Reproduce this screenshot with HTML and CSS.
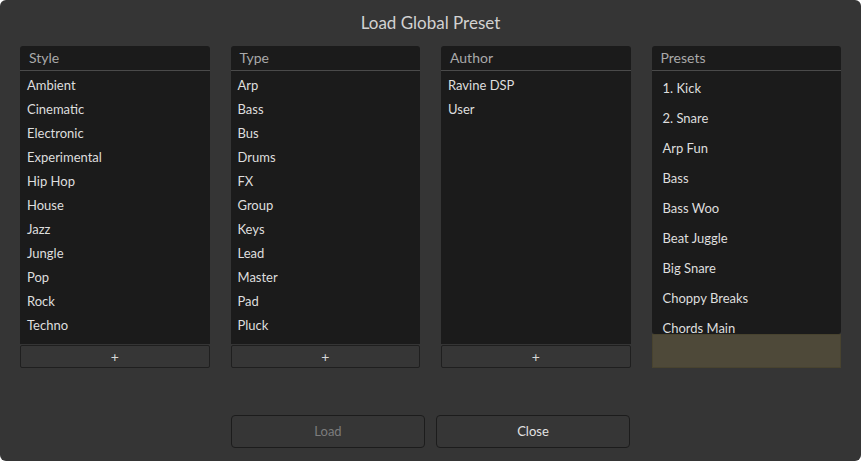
FILE: index.html
```html
<!DOCTYPE html>
<html>
<head>
<meta charset="utf-8">
<link rel="stylesheet" href="styles.css">
</head>
<body>
<div class="window">
  <div class="title">Load Global Preset</div>
  <div class="columns">
    <div class="col">
      <div class="panel">
        <div class="head">Style</div>
        <div class="list">
          <div class="item">Ambient</div>
          <div class="item">Cinematic</div>
          <div class="item">Electronic</div>
          <div class="item">Experimental</div>
          <div class="item">Hip Hop</div>
          <div class="item">House</div>
          <div class="item">Jazz</div>
          <div class="item">Jungle</div>
          <div class="item">Pop</div>
          <div class="item">Rock</div>
          <div class="item">Techno</div>
        </div>
      </div>
      <div class="add">+</div>
    </div>
    <div class="col">
      <div class="panel">
        <div class="head">Type</div>
        <div class="list">
          <div class="item">Arp</div>
          <div class="item">Bass</div>
          <div class="item">Bus</div>
          <div class="item">Drums</div>
          <div class="item">FX</div>
          <div class="item">Group</div>
          <div class="item">Keys</div>
          <div class="item">Lead</div>
          <div class="item">Master</div>
          <div class="item">Pad</div>
          <div class="item">Pluck</div>
        </div>
      </div>
      <div class="add">+</div>
    </div>
    <div class="col">
      <div class="panel">
        <div class="head">Author</div>
        <div class="list">
          <div class="item">Ravine DSP</div>
          <div class="item">User</div>
        </div>
      </div>
      <div class="add">+</div>
    </div>
    <div class="col">
      <div class="panel presets">
        <div class="head">Presets</div>
        <div class="list">
          <div class="pitem">1. Kick</div>
          <div class="pitem">2. Snare</div>
          <div class="pitem">Arp Fun</div>
          <div class="pitem">Bass</div>
          <div class="pitem">Bass Woo</div>
          <div class="pitem">Beat Juggle</div>
          <div class="pitem">Big Snare</div>
          <div class="pitem">Choppy Breaks</div>
          <div class="pitem">Chords Main</div>
        </div>
      </div>
      <div class="info"></div>
    </div>
  </div>
  <div class="actions">
    <div class="btn disabled">Load</div>
    <div class="btn">Close</div>
  </div>
</div>
</body>
</html>
```

FILE: styles.css
```css
html, body {
  margin: 0;
  padding: 0;
  background: #ffffff;
}
body {
  width: 861px;
  height: 461px;
  overflow: hidden;
  font-family: "Lato", "Open Sans", sans-serif;
}
.window {
  width: 861px;
  height: 461px;
  box-sizing: border-box;
  background: #353535;
  border-radius: 6px;
  display: flex;
  flex-direction: column;
  padding: 0 20px;
}
.title {
  height: 46px;
  line-height: 46px;
  text-align: center;
  color: #d2d2d2;
  font-size: 17px;
}
.columns {
  display: flex;
  gap: 21px;
  height: 322px;
}
.col {
  flex: 1;
  display: flex;
  flex-direction: column;
}
.panel {
  flex: 1;
  background: #1b1b1b;
  border-radius: 3px 3px 0 0;
  display: flex;
  flex-direction: column;
  overflow: hidden;
  min-height: 0;
}
.head {
  height: 24px;
  line-height: 24px;
  border-bottom: 1px solid #4a4a4a;
  color: #a9a9a9;
  font-size: 14px;
  padding-left: 9px;
  flex: none;
}
.list {
  padding-top: 2px;
  overflow: hidden;
  flex: 1;
  min-height: 0;
}
.item {
  height: 24px;
  line-height: 24px;
  padding-left: 7px;
  color: #dedede;
  font-size: 13px;
}
.pitem {
  height: 30px;
  line-height: 30px;
  padding-left: 11px;
  color: #dedede;
  font-size: 13px;
}
.presets {
  border-radius: 3px;
}
.add {
  height: 21px;
  line-height: 21px;
  margin-top: 1px;
  border: 1px solid #1f1f1f;
  border-radius: 2px;
  background: #363636;
  color: #d8d8d8;
  text-align: center;
  font-size: 14px;
  flex: none;
}
.info {
  height: 34px;
  box-sizing: border-box;
  border: 1px solid #48432f;
  background: #4e4939;
  flex: none;
}
.actions {
  display: flex;
  justify-content: center;
  gap: 11px;
  margin-top: 47px;
}
.btn {
  width: 194px;
  height: 33px;
  box-sizing: border-box;
  border: 1px solid #1c1c1c;
  border-radius: 4px;
  background: #363636;
  color: #e2e2e2;
  font-size: 13px;
  line-height: 31px;
  text-align: center;
}
.btn.disabled {
  color: #7c7c7c;
}
```
